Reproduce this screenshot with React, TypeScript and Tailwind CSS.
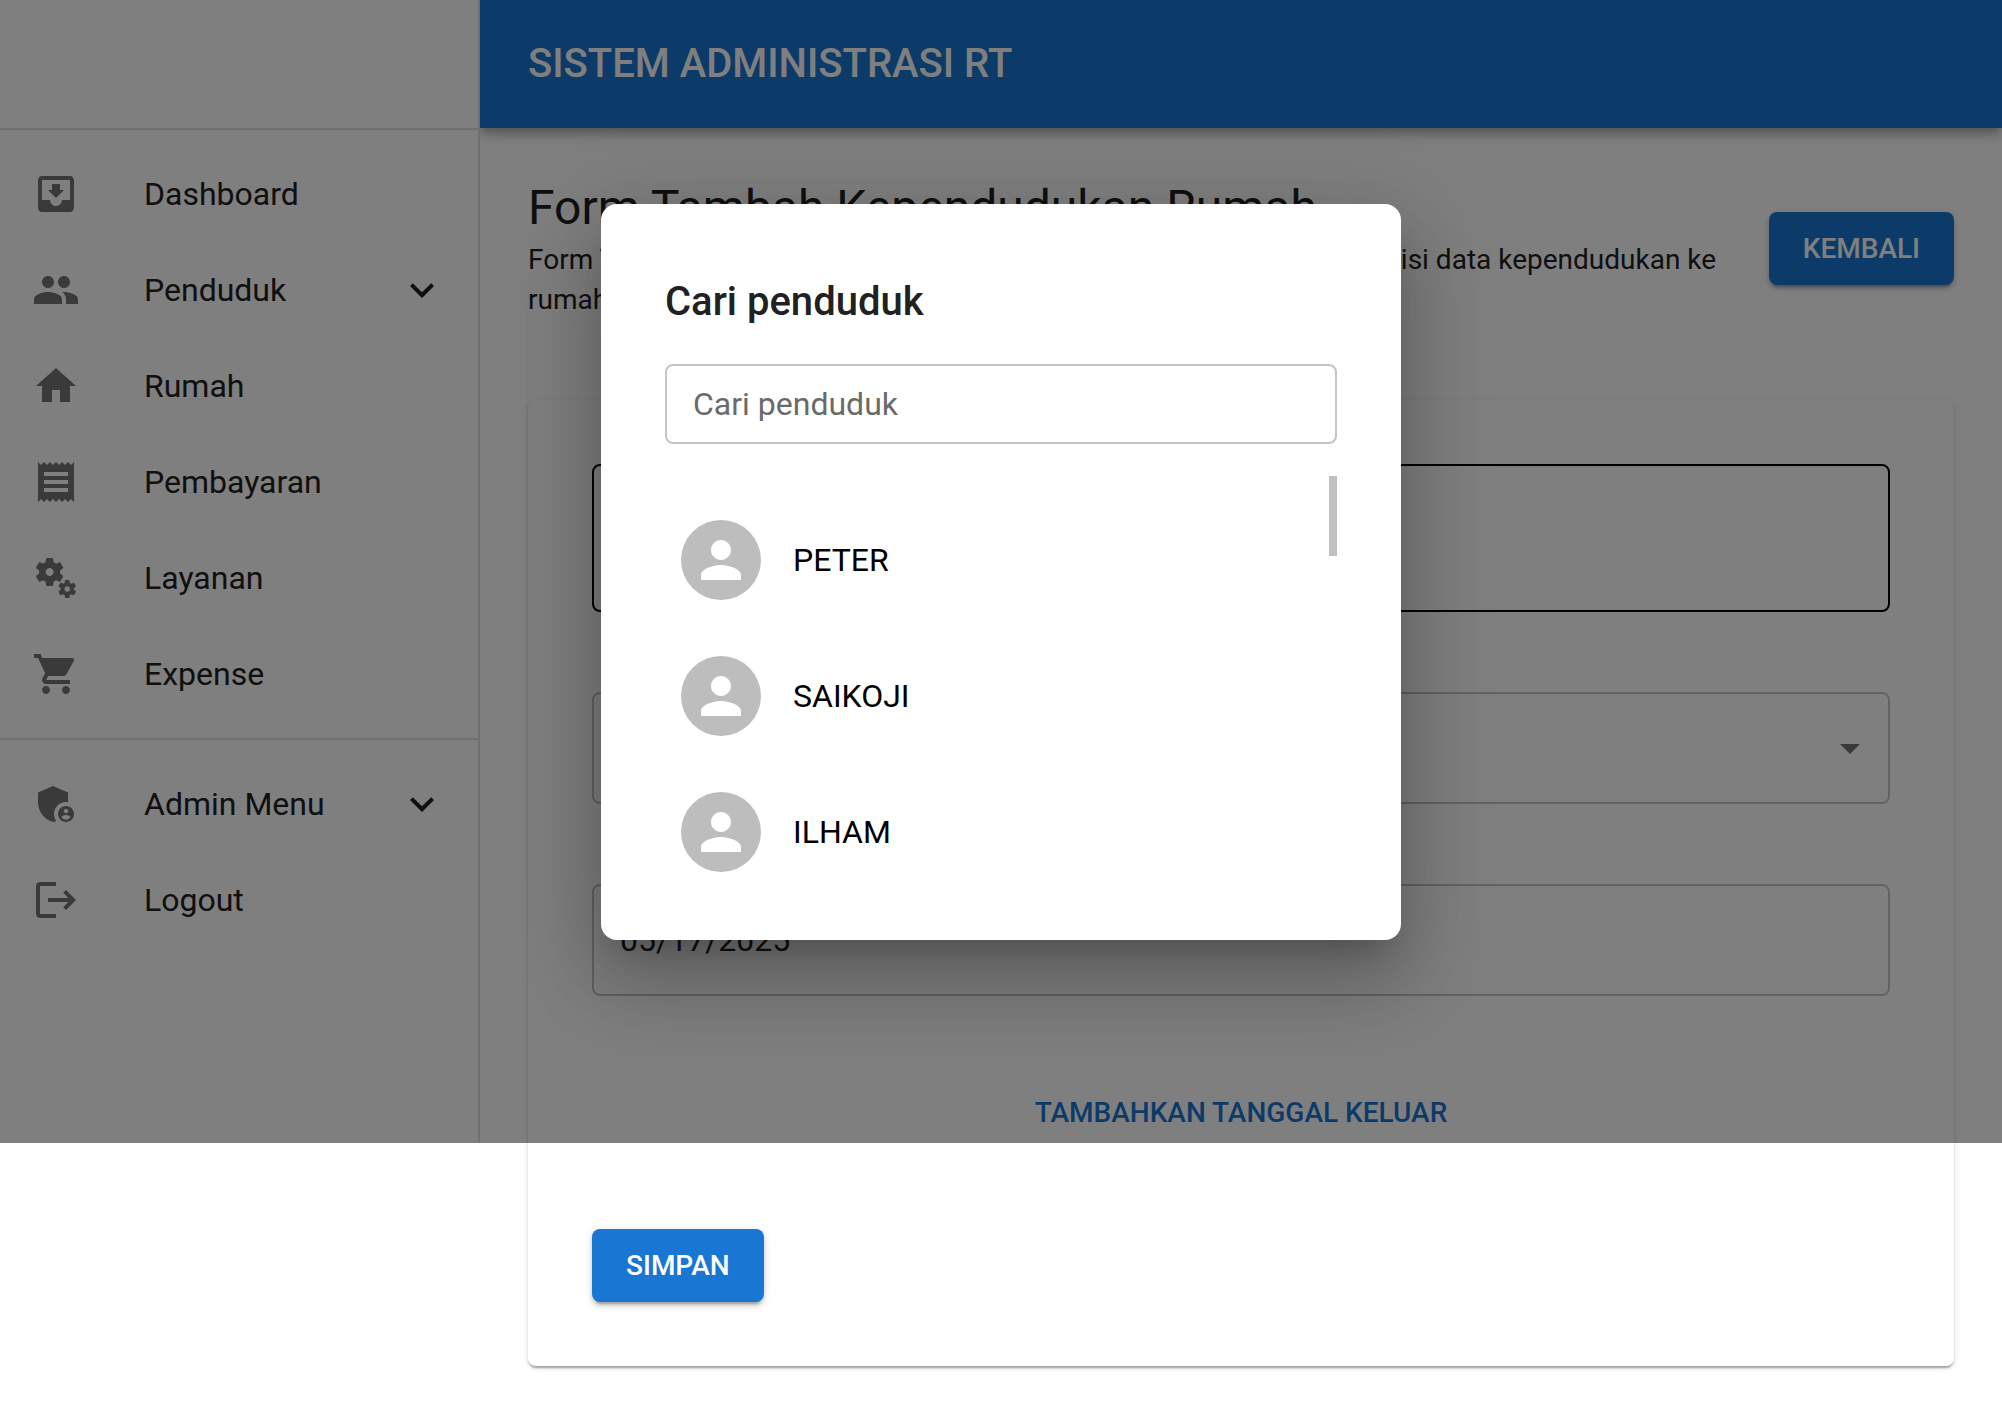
import { useState, type ReactNode } from "react";
import type { IconType } from "react-icons";
import {
  MdAdminPanelSettings,
  MdArrowDropDown,
  MdExpandMore,
  MdHome,
  MdLogout,
  MdMiscellaneousServices,
  MdMoveToInbox,
  MdPeople,
  MdPerson,
  MdReceipt,
  MdShoppingCart,
} from "react-icons/md";

type MenuEntry = { label: string; icon: IconType; expandable?: boolean };

const mainMenu: MenuEntry[] = [
  { label: "Dashboard", icon: MdMoveToInbox },
  { label: "Penduduk", icon: MdPeople, expandable: true },
  { label: "Rumah", icon: MdHome },
  { label: "Pembayaran", icon: MdReceipt },
  { label: "Layanan", icon: MdMiscellaneousServices },
  { label: "Expense", icon: MdShoppingCart },
];

const adminMenu: MenuEntry[] = [
  { label: "Admin Menu", icon: MdAdminPanelSettings, expandable: true },
  { label: "Logout", icon: MdLogout },
];

const residents = ["PETER", "SAIKOJI", "ILHAM"];

function MenuList({ items }: { items: MenuEntry[] }) {
  return (
    <ul className="py-4">
      {items.map(({ label, icon: Icon, expandable }) => (
        <li key={label}>
          <button type="button" className="flex h-24 w-full items-center px-8 text-left text-[32px] leading-12">
            <Icon className="mr-16 size-12 shrink-0 text-[#757575]" />
            <span className="flex-1">{label}</span>
            {expandable && <MdExpandMore className="size-12 shrink-0" />}
          </button>
        </li>
      ))}
    </ul>
  );
}

function ContainedButton({ children }: { children: ReactNode }) {
  return (
    <button
      type="button"
      className="shrink-0 rounded-lg bg-[#1976d2] px-[34px] py-3 text-[28px] leading-[49px] font-medium text-white shadow-[0_6px_2px_-4px_rgba(0,0,0,0.2),0_4px_4px_0_rgba(0,0,0,0.14),0_2px_10px_0_rgba(0,0,0,0.12)]"
    >
      {children}
    </button>
  );
}

function Sidebar() {
  return (
    <nav className="relative z-20 min-h-[1143px] w-[480px] shrink-0 self-start border-r-2 border-black/12 bg-white">
      <div className="h-32" />
      <hr className="border-t-2 border-black/12" />
      <MenuList items={mainMenu} />
      <hr className="border-t-2 border-black/12" />
      <MenuList items={adminMenu} />
    </nav>
  );
}

function ResidentForm() {
  const [date, setDate] = useState("05/17/2025");
  return (
    <form className="flex flex-col items-start gap-20 rounded-lg bg-white p-16 shadow-[0_4px_2px_-2px_rgba(0,0,0,0.2),0_2px_2px_0_rgba(0,0,0,0.14),0_2px_6px_0_rgba(0,0,0,0.12)]">
      <button type="button" aria-label="Pilih penduduk" className="h-37 w-full rounded-lg border-2 border-black" />
      <div className="relative w-full">
        <select
          aria-label="Rumah"
          className="h-28 w-full appearance-none rounded-lg border-2 border-black/23 px-7 text-[32px]"
        />
        <MdArrowDropDown className="pointer-events-none absolute inset-y-0 right-4 my-auto size-12 text-[#757575]" />
      </div>
      <input
        aria-label="Tanggal masuk"
        value={date}
        onChange={(e) => setDate(e.target.value)}
        className="h-28 w-full rounded-lg border-2 border-black/23 px-[26px] text-[32px]"
      />
      <button type="button" className="self-center px-4 py-3 text-[28px] leading-[49px] font-medium text-[#1976d2]">
        TAMBAHKAN TANGGAL KELUAR
      </button>
      <ContainedButton>SIMPAN</ContainedButton>
    </form>
  );
}

function SearchDialog() {
  const [query, setQuery] = useState("");
  return (
    <div className="absolute inset-x-0 top-0 z-30 flex h-[1143px] items-center justify-center overflow-hidden bg-black/50">
      <div
        role="dialog"
        aria-modal="true"
        aria-labelledby="dialog-title"
        className="w-[800px] rounded-2xl bg-white p-16 shadow-[0_22px_30px_-14px_rgba(0,0,0,0.2),0_48px_76px_6px_rgba(0,0,0,0.14),0_18px_92px_16px_rgba(0,0,0,0.12)]"
      >
        <h2 id="dialog-title" className="text-[40px] leading-17 font-medium">
          Cari penduduk
        </h2>
        <input
          aria-labelledby="dialog-title"
          placeholder="Cari penduduk"
          value={query}
          onChange={(e) => setQuery(e.target.value)}
          className="mt-7 h-20 w-full rounded-lg border-2 border-black/23 px-[26px] text-[32px] placeholder:text-[#6a6a6a]"
        />
        <div className="mt-8 flex h-[400px] overflow-hidden">
          <ul className="flex-1 py-4">
            {residents.map((name) => (
              <li key={name}>
                <button type="button" className="flex h-34 w-full items-center gap-8 px-4 text-left text-[32px] text-black">
                  <span className="flex size-20 items-center justify-center rounded-full bg-[#bdbdbd] text-white">
                    <MdPerson className="size-15" />
                  </span>
                  {name}
                </button>
              </li>
            ))}
          </ul>
          <div className="h-20 w-2 bg-[#c1c1c1]" />
        </div>
      </div>
    </div>
  );
}

export default function App() {
  return (
    <div className="relative flex min-h-screen bg-white font-['Roboto',sans-serif] text-[#212121]">
      <Sidebar />
      <div className="min-w-0 flex-1">
        <header className="relative z-10 flex h-32 items-center bg-[#1976d2] px-12 text-[40px] leading-16 font-medium text-white shadow-[0_4px_8px_-2px_rgba(0,0,0,0.2),0_8px_10px_0_rgba(0,0,0,0.14),0_2px_20px_0_rgba(0,0,0,0.12)]">
          SISTEM ADMINISTRASI RT
        </header>
        <main className="p-12 pb-0">
          <div className="mb-20 flex items-center">
            <div className="flex-1">
              <h1 className="text-[48px] leading-16">Form Tambah Kependudukan Rumah</h1>
              <p className="text-[28px] leading-10">
                Form Tambah Kependudukan Rumah digunakan untuk menambahkan isi data kependudukan ke rumah
              </p>
            </div>
            <ContainedButton>KEMBALI</ContainedButton>
          </div>
          <ResidentForm />
        </main>
      </div>
      <SearchDialog />
    </div>
  );
}
